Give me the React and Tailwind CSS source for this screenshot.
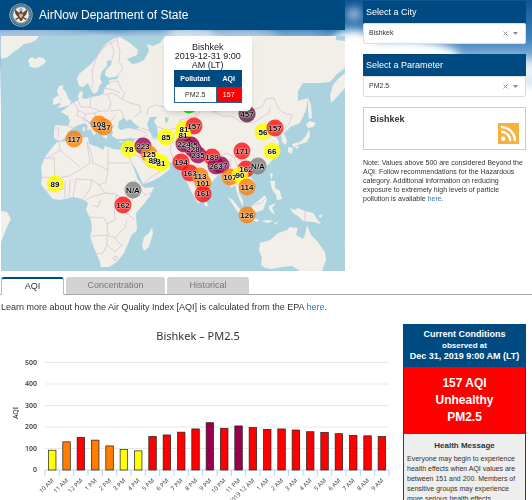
const AXIS = [500, 400, 300, 200, 100, 0]

const HOURS = [
  { label: '10 AM', aqi: 92 },
  { label: '11 AM', aqi: 131 },
  { label: '12 PM', aqi: 152 },
  { label: '1 PM', aqi: 139 },
  { label: '2 PM', aqi: 112 },
  { label: '3 PM', aqi: 95 },
  { label: '4 PM', aqi: 89 },
  { label: '5 PM', aqi: 156 },
  { label: '6 PM', aqi: 163 },
  { label: '7 PM', aqi: 176 },
  { label: '8 PM', aqi: 191 },
  { label: '9 PM', aqi: 220 },
  { label: '10 PM', aqi: 194 },
  { label: '11 PM', aqi: 205 },
  { label: 'Dec 31, 2019 12 AM', aqi: 197 },
  { label: '1 AM', aqi: 189 },
  { label: '2 AM', aqi: 191 },
  { label: '3 AM', aqi: 186 },
  { label: '4 AM', aqi: 178 },
  { label: '5 AM', aqi: 175 },
  { label: '6 AM', aqi: 169 },
  { label: '7 AM', aqi: 161 },
  { label: '8 AM', aqi: 159 },
  { label: '9 AM', aqi: 156 },
]

const TONES = {
  green: 'bg-[#00e400]/90',
  yellow: 'bg-[#ffff00]/85',
  orange: 'bg-[#ff7e00]/80',
  red: 'bg-[#ff0000]/75',
  purple: 'bg-[#99004c]/80',
  maroon: 'bg-[#5c1a3a]/80',
  gray: 'bg-[#808080]/80',
}

// x and y are in map units, see MAP_W and MAP_H
const MAP_W = 344
const MAP_H = 235
const STATIONS = [
  { aqi: '', x: 188, y: 69, tone: 'green' },
  { aqi: '117', x: 73, y: 103, tone: 'orange' },
  { aqi: '137', x: 103, y: 91, tone: 'orange' },
  { aqi: '108', x: 98, y: 88, tone: 'orange' },
  { aqi: '78', x: 128, y: 113, tone: 'yellow' },
  { aqi: '223', x: 142, y: 110, tone: 'purple' },
  { aqi: '125', x: 148, y: 118, tone: 'orange' },
  { aqi: '81', x: 160, y: 127, tone: 'yellow' },
  { aqi: '83', x: 155, y: 125, tone: 'yellow' },
  { aqi: '89', x: 152, y: 124, tone: 'yellow' },
  { aqi: '85', x: 165, y: 101, tone: 'yellow' },
  { aqi: '89', x: 54, y: 148, tone: 'yellow' },
  { aqi: 'N/A', x: 132, y: 154, tone: 'gray' },
  { aqi: '162', x: 122, y: 169, tone: 'red' },
  { aqi: '457', x: 246, y: 78, tone: 'maroon' },
  { aqi: '56', x: 262, y: 96, tone: 'yellow' },
  { aqi: '157', x: 274, y: 92, tone: 'red' },
  { aqi: '66', x: 271, y: 115, tone: 'yellow' },
  { aqi: '171', x: 241, y: 115, tone: 'red' },
  { aqi: '81', x: 183, y: 93, tone: 'yellow' },
  { aqi: '157', x: 193, y: 90, tone: 'red' },
  { aqi: '81', x: 182, y: 99, tone: 'yellow' },
  { aqi: '245', x: 190, y: 109, tone: 'purple' },
  { aqi: '224', x: 183, y: 108, tone: 'purple' },
  { aqi: '228', x: 192, y: 113, tone: 'purple' },
  { aqi: '235', x: 197, y: 119, tone: 'purple' },
  { aqi: '189', x: 211, y: 121, tone: 'red' },
  { aqi: '237', x: 220, y: 129, tone: 'purple' },
  { aqi: '263', x: 215, y: 130, tone: 'purple' },
  { aqi: '194', x: 180, y: 126, tone: 'red' },
  { aqi: '163', x: 189, y: 137, tone: 'red' },
  { aqi: '113', x: 199, y: 140, tone: 'orange' },
  { aqi: '101', x: 202, y: 147, tone: 'orange' },
  { aqi: '161', x: 202, y: 158, tone: 'red' },
  { aqi: '107', x: 229, y: 141, tone: 'orange' },
  { aqi: '162', x: 245, y: 133, tone: 'red' },
  { aqi: '90', x: 239, y: 139, tone: 'yellow' },
  { aqi: 'N/A', x: 257, y: 130, tone: 'gray' },
  { aqi: '114', x: 246, y: 151, tone: 'orange' },
  { aqi: '126', x: 246, y: 179, tone: 'orange' },
]

function barColor(aqi) {
  if (aqi > 200) return '#99004c'
  if (aqi > 150) return '#ff0000'
  if (aqi > 100) return '#ff7e00'
  return '#ffff00'
}

function place(station) {
  return { left: `${(station.x / MAP_W) * 100}%`, top: `${(station.y / MAP_H) * 100}%` }
}

function Sky() {
  return (
    <svg
      className="absolute inset-x-0 top-0 -z-10 h-[130px] w-full"
      viewBox="0 0 532 130"
      preserveAspectRatio="none"
      aria-hidden="true"
    >
      <defs>
        <linearGradient id="sky" x1="0" y1="0" x2="0" y2="1">
          <stop offset="0" stopColor="#0f5596" />
          <stop offset="0.3" stopColor="#3f83bd" />
          <stop offset="0.55" stopColor="#b9d3e8" />
          <stop offset="0.85" stopColor="#ffffff" />
        </linearGradient>
        <filter id="soft" x="-20%" y="-40%" width="140%" height="180%">
          <feGaussianBlur stdDeviation="4" />
        </filter>
      </defs>
      <rect width="532" height="130" fill="url(#sky)" />
      <g filter="url(#soft)" fill="#ffffff">
        <ellipse cx="30" cy="42" rx="90" ry="16" opacity="0.55" />
        <ellipse cx="150" cy="44" rx="70" ry="14" opacity="0.6" />
        <ellipse cx="190" cy="32" rx="25" ry="6" opacity="0.7" />
        <ellipse cx="240" cy="36" rx="40" ry="8" opacity="0.6" />
        <ellipse cx="300" cy="38" rx="30" ry="7" opacity="0.4" />
        <ellipse cx="354" cy="14" rx="7" ry="6" opacity="0.6" />
        <ellipse cx="353" cy="62" rx="32" ry="32" />
        <ellipse cx="400" cy="58" rx="60" ry="18" />
        <ellipse cx="500" cy="70" rx="55" ry="12" opacity="0.7" />
        <ellipse cx="420" cy="105" rx="180" ry="24" />
      </g>
    </svg>
  )
}

function Seal() {
  return (
    <svg className="h-6 w-6 shrink-0" viewBox="0 0 24 24" role="img" aria-label="Department of State seal">
      <circle cx="12" cy="12" r="11.6" fill="#c9c08a" />
      <circle cx="12" cy="12" r="10.9" fill="#3c6c9e" />
      <circle cx="12" cy="12" r="9.2" fill="none" stroke="#a9c0d4" strokeWidth="1" strokeDasharray="0.8 0.9" />
      <circle cx="12" cy="12" r="7.9" fill="#f4f1e6" stroke="#c9b878" strokeWidth="0.5" />
      <circle cx="12" cy="7" r="1.9" fill="#8fb4d4" />
      <path
        d="M11 8.2L12.6 8l.6 1.5c1.8-.1 2.6-1.6 4.8-3.2.5 3.6-.8 6.3-3.2 7.6l2.8 2.2-1 .8-2.5-1.7L12.8 18h-1.6L10 15.200l-2.600 1.700-1-.8 2.800-2.200C6.800 12.600 5.500 9.900 6 6.300c2.200 1.600 3 3.100 4.900 3.200z"
        fill="#65492c"
      />
      <path d="M10.300 10.200h3.400v2.900L12 15.200l-1.700-2.100z" fill="#ffffff" />
      <path d="M10.300 10.200h3.400v1h-3.400z" fill="#2b4a86" />
      <path d="M10.900 11.200v2.600M12 11.200v3.700M13.100 11.200v2.600" stroke="#b8372f" strokeWidth="0.5" />
      <path d="M5.800 15.500l2 1.400M18.200 15.500l-2 1.400" stroke="#5d7f4a" strokeWidth="0.9" />
    </svg>
  )
}

function WorldMap() {
  return (
    <svg
      className="absolute inset-0 h-full w-full"
      viewBox="1 36 344 235"
      preserveAspectRatio="none"
      role="img"
      aria-label="World map"
    >
      <rect x="1" y="36" width="344" height="235" fill="#aad3df" />
      <g fill="#f2efe9">
        {/* Greenland, Iceland, British Isles */}
        <path d="M1 36H39L36 40 30 43 24 44 18 49 12 53 8 57 1 59z" />
        <path d="M28 62l1-3 3-2 3 2 4-2 4 1 3 3-2 3-5 3-5 1-5-2 1-2z" />
        <path d="M59 86l4-1 0 4 3 3 2 6 3 3-1 4-7 2-6 1 4-4-2-1 2-4-3-4-1-4z" />
        <path d="M53 99l4-3 3 1 0 5-3 2-4 1z" />
        {/* Europe and Asia */}
        <path d="M120 37L113 39 106 44 101 50 96 58 91 64 85 69 79 74 77 79 79 86 83 87 88 83 91 90 94 94 98 91 99 86 102 83 100 78 102 71 107 66 107 61 112 60 111 65 106 70 105 75 109 78 119 76 117 79 109 80 110 84 107 85 105 88 103 94 98 96 91 97 86 99 82 98 83 92 80 91 78 96 79 100 74 102 70 105 66 108 61 112 68 116 70 121 68 126 55 125 54 131 54 138 57 140 61 141 66 137 68 132 73 128 78 125 85 123 91 130 94 136 96 133 92 127 88 122 91 121 97 125 101 130 103 137 107 139 107 134 110 130 113 131 112 136 117 139 123 139 130 138 135 139 133 148 129 154 131 161 137 171 143 184 150 182 160 177 170 169 170 164 165 160 157 161 152 155 158 158 167 162 175 163 181 166 184 175 190 189 198 204 202 200 204 191 213 181 219 174 225 174 229 181 231 188 235 185 237 193 240 201 243 207 243 200 239 193 239 186 246 192 254 187 254 181 247 173 249 169 258 170 268 165 275 157 279 149 279 142 275 135 281 134 282 142 286 145 287 140 284 134 290 127 300 123 306 110 308 98 298 101 298 91 303 83 320 83 330 82 337 74 345 68V41L336 40V36H165L160 43 153 46 147 44 149 51 144 60 138 63 132 64 127 59 137 55 138 50 130 43z" />
        <path d="M345 73L338 79 333 85 330 95 331 103 336 98 345 88z" />
        <path d="M308 98l3 7 1 13-3 1-1-9z" />
        <path d="M306 124l4-3 6 2-3 4-5 1zM309 129l1 7-3 6-9 3-5 2-1-3 8-2 6-6zM288 147l5 1-1 6-4-2zM294 147l5-1-2 3z" />
        <path d="M270 173l3 1-2 6zM270 181l5 0 0 7 5 3 1 5-6-2-3-5zM276 195l5 0 1 4-5 1z" />
        {/* Africa and Madagascar */}
        <path d="M57 142L67 141 77 138 88 137 89 144 98 147 103 150 105 146 113 149 124 150 128 155 134 169 138 180 144 188 154 187 150 196 143 205 136 213 137 230 131 236 128 244 124 253 117 262 109 267 101 267 100 262 94 248 90 236 92 230 91 220 86 210 88 203 82 199 73 197 60 200 53 199 46 191 41 184 42 177 41 167 45 157 51 149z" />
        <path d="M152 227l1 6-4 14-5 4-2-5 2-9 5-4z" />
        <path d="M1 211L7 212 11 219 7 227 3 237 1 242z" />
        {/* Indonesia, New Guinea, Australia */}
        <path d="M228 197l5 3 9 12-3 2-6-9zM242 215l9 2 8 3-1 2-15-4zM252 205l5-3 8-7 2 5-4 10-6 2-5-2zM269 206l7-3-4 5 3 6-3-1-3-4zM261 221l7-1 5 1-5 2zM274 223l5-2-4 4z" />
        <path d="M290 208l5 2 3-2 7 3 8 2 4 6 4 5-8-2-10-1-5-5-5-3z" />
        <path d="M318 216l5-2-2 4zM330 219l4 3M205 201l3 3-1 3-3-2zM343 241l2 1v1z" />
        <path d="M287 230L290 227 298 228 296 235 303 239 305 235 307 225 311 235 317 241 325 252 326 260 322 271H300L292 266 283 267 272 269 265 268 261 265 262 258 259 250 260 243 270 240 278 233z" />
        <path d="M88 125l2 5-3 0zM83 127l2 0 0 4-2 0zM118 141l5 0-1 2z" />
      </g>
      {/* Inland seas */}
      <g fill="#aad3df">
        <path d="M118 128L119 121 124 118 127 121 130 119 135 124 140 128 134 129 128 128 121 130z" />
        <path d="M150 117L157 117 154 121 157 126 158 137 153 138 149 130 147 124z" />
        <path d="M165 117l4 1-2 5-2-1zM231 101l6-6-3 6z" />
        <path d="M149 154l4 5 5 3 5 1-5 2-6-4z" />
      </g>
      <g fill="none" stroke="#d6bdd9" strokeWidth="0.7" strokeLinejoin="round">
        <path d="M118 39l-8 4-9 7-5 9-4 12 1 12-2 5M111 43l3 8-2 8M117 40l3 11-1 10 4 8-6 7M110 82l8-1 3 8 4 4-3 6 8 4 9 2 2 7-7 5M105 88l9 2 6 3M103 95l10-2 9 6M91 97l-1 10 10 4 8 0 3-7-3-9M90 107l-9 0-3-6M74 102l4 8-1 6 6 2 5 3M78 110l8 4 9-1 5-2M86 114l-3 6 6 2M95 113l1 6 7 3 8-1 5-6M101 125l8 3 6-2M110 111l10-1 4 6-2 5M108 128l1-6M55 128l4 0-1 9M68 126l5 2" />
        <path d="M141 128l9 3M131 128l8 2 8 3M134 139l8-1 6-4M139 139l2 8 8 9M134 148l8 2 9 7M151 138l9 1 10 5 1 9 4 10M147 115l1-7 8-3 8 2 10-4 8 3 8 2 7 8M158 127l9 3 10-2 3-8 9-2M170 144l8-4 8 2 6-5M175 162l6-8 5-9 5-6M188 117l8 0 5-7 7-3 5 4 9 5 10 0 9 6 12 1 9-6 7-4 1-6M212 112l11-2 9-2 9 3 11-1 10-3 4-8 8-1 4 10 6 5 8 2-3 9-8 8M201 120l-3 8-7 6 5 9 8 8 10 5 7 0 6-3 8 5 3 9 8-3 8 4M196 146l5 8 12 5 8-1M222 158l3 7-2 8M231 159l-1 9 5 7 2 10M237 169l5 2 3 6-3 8M239 158l7 10 4 8" />
        <path d="M143 184l8-7 9-5-1-8M130 155l8 1 10 11" />
        <path d="M59 142l1 8-14 9M44 158h10M60 150l20 17M54 157l1 21-14-1M55 178l14-2 12-7 9-6-3-21M87 142l4 10 2 11 15 7V149M108 163h22M108 170l-2 12-7 3-7-5-16-1M76 179l-3 18M70 180l-1 17M65 181l0 17M56 178l3 11 6 0M46 191l7-4 6 2M92 180l-2 9-7 10M99 185l6 8 11 1 10 7 6-1 2-7-4-8 6-5M105 193l-14 4-6 4M130 201l-5 11 10 8M117 194l-3 12 1 14-8 4 1 11M92 205l6 2 3-8M90 217l14 1 3 6M91 236l16-1 8 3 5-6 5-4 2-8M107 235l0 10-4 8-7 1M107 245l8 7 8-8M115 238l7 8M122 205l-8 1M140 188l5 7 8-3M115 256l3 2-2 3-3-2z" />
        <path d="M252 205l9-2 4-4M305 211v10M282 134l5-3" />
      </g>
    </svg>
  )
}

function Popup() {
  return (
    <div className="absolute top-0 left-[47.3%] w-[88px] rounded-b-md rounded-t-sm bg-white px-[10px] pt-[7px] pb-[8px] text-center shadow-md">
      <p className="text-[9px] leading-[9px] text-[#222]">Bishkek</p>
      <p className="text-[9px] leading-[9px] whitespace-nowrap text-[#222]">2019-12-31 9:00</p>
      <p className="text-[9px] leading-[9px] text-[#222]">AM (LT)</p>
      <table className="w-full table-fixed border-collapse text-[7px] leading-[15px]">
        <thead>
          <tr className="bg-[#004a82] text-white">
            <th className="border border-[#004a82] font-bold">Pollutant</th>
            <th className="w-[25px] border border-[#004a82] font-bold">AQI</th>
          </tr>
        </thead>
        <tbody>
          <tr>
            <td className="border border-[#2a5f94] text-[#333]">PM2.5</td>
            <td className="border border-[#2a5f94] bg-[#ff0000] text-white">157</td>
          </tr>
        </tbody>
      </table>
    </div>
  )
}

function SelectBox({ id, title, options }) {
  return (
    <div>
      <label htmlFor={id} className="block bg-[#004a82] px-[3px] text-[9px] leading-[22px] text-white">
        {title}
      </label>
      <div className="relative flex h-[21px] items-center rounded-[2px] border border-[#ddd] bg-white">
        <select id={id} className="h-full w-full appearance-none bg-transparent pl-[5px] text-[7px] text-[#333]">
          {options.map((option) => (
            <option key={option}>{option}</option>
          ))}
        </select>
        <button type="button" aria-label="Clear" className="absolute right-[17px] text-[#888]">
          <svg className="h-[5px] w-[5px]" viewBox="0 0 5 5">
            <path d="M0.500 0.500l4 4M4.500 0.500l-4 4" stroke="currentColor" strokeWidth="0.9" />
          </svg>
        </button>
        <svg className="pointer-events-none absolute right-[7px] h-[3px] w-[5px]" viewBox="0 0 5 3">
          <path d="M0 0h5L2.500 3z" fill="#888" />
        </svg>
      </div>
    </div>
  )
}

function Tabs() {
  return (
    <div role="tablist" className="flex gap-[2px] border-b border-[#aaa] pl-px text-[9px]">
      <button
        type="button"
        role="tab"
        aria-selected="true"
        className="-mb-px h-[18px] w-[63px] rounded-t-[3px] border border-t-2 border-[#bbb] border-t-[#004a82] border-b-white bg-white text-[#333]"
      >
        AQI
      </button>
      <button type="button" role="tab" aria-selected="false" className="h-[17px] w-[99px] rounded-t-[3px] bg-[#d3d3d3] text-[#777]">
        Concentration
      </button>
      <button type="button" role="tab" aria-selected="false" className="h-[17px] w-[82px] rounded-t-[3px] bg-[#d3d3d3] text-[#777]">
        Historical
      </button>
    </div>
  )
}

function Chart() {
  const base = 146
  const y = (aqi) => base - aqi * 0.215
  const step = 344 / HOURS.length

  return (
    <svg className="block w-full font-['Noto_Sans',sans-serif]" viewBox="0 0 402 200" role="img" aria-label="Bishkek PM2.5 by hour">
      <text x="198" y="16" textAnchor="middle" fontSize="11" fill="#333">
        Bishkek – PM2.5
      </text>
      <text x="18" y="89" textAnchor="middle" fontSize="7" fill="#222" transform="rotate(-90 18 89)">
        AQI
      </text>
      {AXIS.map((tick) => (
        <g key={tick}>
          <path d={`M45 ${y(tick)}h344`} stroke={tick === 0 ? '#c0d0e0' : '#e8e8e8'} strokeWidth="1" />
          <text x="37" y={y(tick) + 2} textAnchor="end" fontSize="7" fontWeight="600" fill="#444">
            {tick}
          </text>
        </g>
      ))}
      {HOURS.map((hour, i) => {
        const left = 45 + i * step
        const mid = left + step / 2
        return (
          <g key={hour.label}>
            <path d={`M${left} ${base}v6`} stroke="#c0d0e0" />
            <rect
              x={mid - 3.7}
              y={y(hour.aqi)}
              width="7.500"
              height={base - y(hour.aqi)}
              fill={barColor(hour.aqi)}
              stroke="#222"
              strokeWidth="0.7"
            />
            <text
              x={mid + 2}
              y="157"
              textAnchor="end"
              fontSize="6"
              fill="#444"
              transform={`rotate(-45 ${mid + 2} 157)`}
            >
              {hour.label}
            </text>
          </g>
        )
      })}
      <path d={`M389 ${base}v6`} stroke="#c0d0e0" />
    </svg>
  )
}

function Conditions() {
  return (
    <aside className="border border-[#004a82] bg-[#eeeeee] text-center">
      <div className="bg-[#004a82] pt-[3px] pb-[5px] font-bold text-white">
        <p className="text-[9px] leading-[12px]">Current Conditions</p>
        <p className="text-[8px] leading-[11px]">observed at</p>
        <p className="text-[9px] leading-[11px] whitespace-nowrap">Dec 31, 2019 9:00 AM (LT)</p>
      </div>
      <div className="bg-[#ff0000] py-[8px] text-[12px] leading-[17px] font-bold text-white">
        <p>157 AQI</p>
        <p>Unhealthy</p>
        <p>PM2.5</p>
      </div>
      <div className="px-[3px] pt-[7px] text-[#333]">
        <h2 className="text-[8px] leading-[10px] font-bold">Health Message</h2>
        <p className="pt-[3px] text-left text-[7px] leading-[10px]">
          Everyone may begin to experience health effects when AQI values are between 151 and 200. Members of sensitive
          groups may experience more serious health effects.
        </p>
      </div>
    </aside>
  )
}

export default function App() {
  return (
    <div className="relative isolate h-screen overflow-hidden bg-white font-['Liberation_Sans',Arial,sans-serif]">
      <Sky />

      <div className="grid grid-cols-[minmax(0,1fr)_163px] gap-[18px] pr-[6px]">
        <div>
          <header className="flex h-[30px] items-center gap-[6px] bg-[#004a82] pl-[9px]">
            <Seal />
            <h1 className="text-[12px] leading-[16px] text-white">AirNow Department of State</h1>
          </header>
          <div className="pt-[6px] pl-px">
            <div className="relative h-[235px] overflow-hidden">
              <WorldMap />
              {STATIONS.map((station) => (
                <span
                  key={`${station.x}-${station.y}`}
                  className={`absolute h-[17px] w-[17px] -translate-x-1/2 -translate-y-1/2 rounded-full ${TONES[station.tone]}`}
                  style={place(station)}
                />
              ))}
              {/* values go in a second pass so no dot covers a number */}
              {STATIONS.map((station) => (
                <button
                  key={`${station.x}-${station.y}`}
                  type="button"
                  aria-label={`AQI ${station.aqi}`}
                  className="absolute flex h-[17px] w-[17px] -translate-x-1/2 -translate-y-1/2 items-center justify-center rounded-full text-[8px] leading-none font-bold text-black [text-shadow:0_0_1px_#fff,0_0_1px_#fff,0_0_2px_#fff]"
                  style={place(station)}
                >
                  {station.aqi}
                </button>
              ))}
              <Popup />
            </div>
          </div>
        </div>

        <div className="flex flex-col pt-px">
          <SelectBox id="city" title="Select a City" options={['Bishkek']} />
          <div className="pt-[10px]">
            <SelectBox id="parameter" title="Select a Parameter" options={['PM2.5']} />
          </div>
          <div className="mt-[10px] flex h-[43px] justify-between border border-[#ccc] bg-white px-[6px] py-[5px]">
            <h2 className="text-[9px] leading-[12px] font-bold text-[#333]">Bishkek</h2>
            <a href="#rss" aria-label="RSS feed" className="self-end">
              <svg className="h-[21px] w-[21px]" viewBox="0 0 21 21">
                <path d="M0 0h21v21H0z" fill="#f5b23c" />
                <circle cx="5.200" cy="15.800" r="2.200" fill="#fff" />
                <path d="M3 8.700a9.300 9.300 0 0 1 9.300 9.300M3 4a14 14 0 0 1 14 14" fill="none" stroke="#fff" strokeWidth="2.500" />
              </svg>
            </a>
          </div>
          <p className="pt-[8px] text-[7px] leading-[9px] text-[#333]">
            Note: Values above 500 are considered Beyond the AQI. Follow recommendations for the Hazardous category.
            Additional information on reducing exposure to extremely high levels of particle pollution is available{' '}
            <a href="#beyond" className="text-[#337ab7]">
              here
            </a>
            .
          </p>
        </div>
      </div>

      <main className="pt-[6px]">
        <Tabs />
        <p className="pt-[6px] pl-px text-[9px] leading-[12px] text-[#333]">
          Learn more about how the Air Quality Index [AQI] is calculated from the EPA{' '}
          <a href="#epa" className="text-[#337ab7]">
            here
          </a>
          .
        </p>
        <div className="grid grid-cols-[minmax(0,1fr)_123px] items-start gap-px pt-[11px] pr-[6px]">
          <Chart />
          <Conditions />
        </div>
      </main>
    </div>
  )
}
